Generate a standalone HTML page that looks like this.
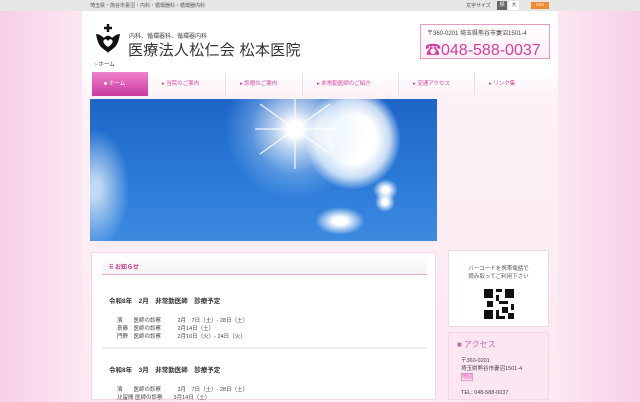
<!DOCTYPE html>
<html><head><meta charset="utf-8"><style>
*{margin:0;padding:0;box-sizing:border-box}
body{width:640px;height:400px;overflow:hidden;font-family:"Liberation Sans","Noto Sans CJK JP",sans-serif;background:linear-gradient(90deg,#f7cfe6 0%,#fbe6f1 12%,#fdf3f8 50%,#fbe6f1 88%,#f7cfe6 100%);position:relative;color:#333}
.top{position:absolute;left:0;top:0;width:640px;height:11px;background:#e6e6e6;font-size:5px;color:#555}
.wrap{position:absolute;left:82px;top:11px;width:476px;height:389px;background:linear-gradient(#fff 0,#fff 60px,#fdf0f6 90px,#fbe8f2 100%)}
.abs{position:absolute}
.nav a{position:absolute;top:72px;height:24px;font-size:5.5px;color:#d040a0;line-height:24px;border-right:1px solid #f0e0ea}
</style></head><body>
<div class="top"><span class="abs" style="left:90px;top:2px">埼玉県・熊谷市妻沼・内科・循環器科・循環器内科</span>
<span class="abs" style="left:466px;top:2px">文字サイズ</span>
<span class="abs" style="left:497px;top:1px;width:10px;height:9px;background:#666;color:#fff;text-align:center">標</span>
<span class="abs" style="left:509px;top:1px;width:10px;height:9px;background:#fff;text-align:center">大</span>
<span class="abs" style="left:531px;top:2px;width:18px;height:7px;background:#f08a30;color:#fff;text-align:center;font-size:4px">RSS</span></div>
<div class="wrap"></div>
<svg class="abs" style="left:93px;top:24px" width="30" height="30" viewBox="0 0 30 30"><path d="M15 0v8M11 4h8" stroke="#111" stroke-width="2.5"/><path d="M3 10c3 0 6 2 8 4 2-3 6-3 8 0 2-2 5-4 8-4-1 5-2 10-5 13-3 3-6 4-7 6-1-2-4-3-7-6-3-3-4-8-5-13z" fill="#111"/><path d="M11 16c2-2 3 0 4 1 1-1 2-3 4-1s-1 5-4 7c-3-2-6-5-4-7z" fill="#fff"/></svg>
<div class="abs" style="left:129px;top:31px;font-size:6px;color:#444">内科、循環器科、循環器内科</div>
<div class="abs" style="left:128px;top:39px;font-size:15px;color:#333;letter-spacing:0.3px">医療法人松仁会 松本医院</div>
<div class="abs" style="left:95px;top:60px;font-size:5.5px;color:#333">› ホーム</div>
<div class="abs" style="left:420px;top:24px;width:130px;height:35px;border:1px solid #e59ac8;background:linear-gradient(#fff,#fbeef5)">
<div style="position:absolute;left:6px;top:3px;font-size:6px;color:#444">〒360-0201 埼玉県熊谷市妻沼1501-4</div>
<div style="position:absolute;left:4px;top:11px;font-size:16px;color:#d040a0">☎048-588-0037</div></div>
<div class="nav">
<a style="left:92px;width:56px;background:linear-gradient(#ee80cc,#c93aa0);color:#fff;padding-left:12px;border:none">■ ホーム</a>
<a style="left:148px;width:78px;padding-left:14px">▸ 当院のご案内</a>
<a style="left:226px;width:77px;padding-left:14px">▸ 診療のご案内</a>
<a style="left:303px;width:96px;padding-left:14px">▸ 非常勤医師のご紹介</a>
<a style="left:399px;width:76px;padding-left:14px">▸ 交通アクセス</a>
<a style="left:475px;width:75px;padding-left:14px;border:none">▸ リンク集</a></div>
<div class="abs" style="left:90px;top:99px;width:347px;height:142px;overflow:hidden;background:linear-gradient(180deg,#1e66c8 0%,#2b7bd8 60%,#3d8ae0 100%)">
<div class="abs" style="left:-30px;top:30px;width:70px;height:120px;border-radius:50%;background:radial-gradient(rgba(230,240,250,.8) 10%,rgba(255,255,255,0) 70%)"></div>
<div class="abs" style="left:215px;top:-10px;width:95px;height:100px;border-radius:50%;background:radial-gradient(#fff 35%,rgba(240,245,252,.8) 55%,rgba(255,255,255,0) 72%)"></div>
<div class="abs" style="left:135px;top:-45px;width:140px;height:150px;background:radial-gradient(circle at 70px 75px,#fff 0,#fff 8px,rgba(255,255,255,.7) 20px,rgba(200,225,250,.3) 45px,rgba(255,255,255,0) 70px)"></div>
<svg class="abs" style="left:165px;top:-10px" width="80" height="80"><g stroke="#fff" stroke-width="1.2" opacity=".9"><path d="M40 0V80M5 15L75 65M5 65L75 15M0 40H80"/></g></svg>
<div class="abs" style="left:225px;top:108px;width:50px;height:28px;border-radius:50%;background:radial-gradient(#fff 20%,rgba(255,255,255,0) 70%)"></div>
<div class="abs" style="left:283px;top:80px;width:25px;height:22px;border-radius:50%;background:radial-gradient(#fff 20%,rgba(255,255,255,0) 70%)"></div>
<div class="abs" style="left:285px;top:93px;width:20px;height:20px;border-radius:50%;background:radial-gradient(#fff 20%,rgba(255,255,255,0) 70%)"></div></div>
<div class="abs" style="left:91px;top:252px;width:345px;height:148px;background:#fff;border:1px solid #f2d8e8">
<div class="abs" style="left:10px;top:4px;width:325px;height:18px;border-bottom:1px solid #e3a8d0;background:linear-gradient(#fff,#f3f3f3)"><span style="position:absolute;left:7px;top:5px;font-size:6px;color:#c03090;font-weight:bold">⠿ お知らせ</span></div>
<div class="abs" style="left:17px;top:42px;font-size:6.5px;font-weight:bold">令和8年　2月　非常勤医師　診療予定</div>
<div class="abs" style="left:25px;top:64px;font-size:5.5px;line-height:8px;color:#444">濱　　医師の診察　　　2月　7日（土）- 28日（土）<br>斎藤　医師の診察　　　2月14日（土）<br>門野　医師の診察　　　2月10日（火）- 24日（火）</div>
<div class="abs" style="left:10px;top:94px;width:325px;height:2px;background:#eee"></div>
<div class="abs" style="left:17px;top:111px;font-size:6.5px;font-weight:bold">令和8年　3月　非常勤医師　診療予定</div>
<div class="abs" style="left:25px;top:133px;font-size:5.5px;line-height:8px;color:#444">濱　　医師の診察　　　3月　7日（土）- 28日（土）<br>比留間 医師の診察　　3月14日（土）</div></div>
<div class="abs" style="left:448px;top:250px;width:101px;height:77px;background:#fff;border:1px solid #f2d8e8">
<div style="text-align:center;font-size:5.5px;color:#555;margin-top:14px;line-height:8px">バーコードを携帯電話で<br>読み取ってご利用下さい</div>
<svg style="position:absolute;left:35px;top:38px" width="30" height="30" viewBox="0 0 10 10"><rect width="10" height="10" fill="#fff"/><path d="M0 0h3v3H0zM7 0h3v3H7zM0 7h3v3H0zM4 0h2v1H4zM4 2h1v2H4zM5 4h3v1H5zM1 4h2v2H1zM6 6h2v2H6zM4 7h1v3H4zM8 8h2v2H8zM9 5h1v2H9zM5 9h2v1H5z" fill="#111"/></svg></div>
<div class="abs" style="left:448px;top:332px;width:101px;height:68px;background:#fce6f2;border:1px solid #f6d6e8">
<div style="position:absolute;left:8px;top:6px;font-size:8px;color:#c86aa8">■ アクセス</div>
<div style="position:absolute;left:12px;top:24px;font-size:5.5px;line-height:8px;color:#444">〒360-0201<br>埼玉県熊谷市妻沼1501-4<br><span style="color:#e040a0;border:1px solid #e59ac8;font-size:5px">地図</span><br><br>TEL: 048-588-0037</div></div>
</body></html>
